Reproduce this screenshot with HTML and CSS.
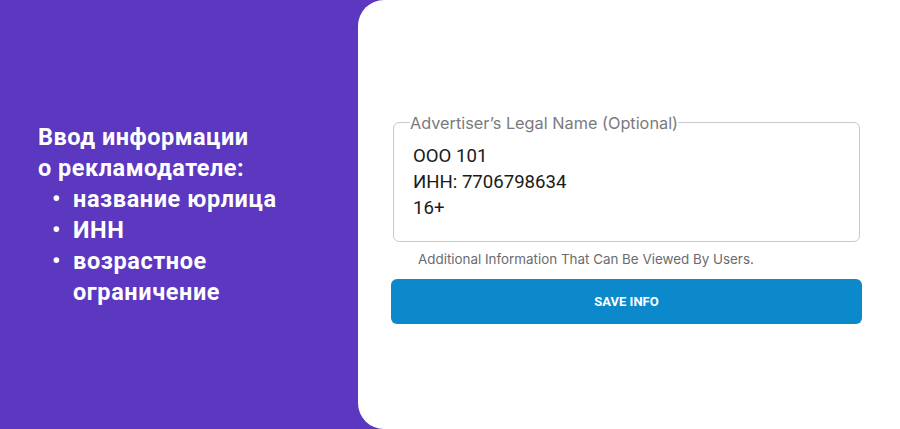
FILE: index.html
```html
<!DOCTYPE html>
<html lang="ru">
<head>
    <meta charset="UTF-8">
    <title>Advertiser info</title>
    <link rel="stylesheet" href="styles.css">
</head>
<body>
    <div class="page">
        <div class="promo">
            <p class="promo-title">Ввод информации<br>о рекламодателе:</p>
            <ul class="promo-list">
                <li>название юрлица</li>
                <li>ИНН</li>
                <li><span>возрастное<br>ограничение</span></li>
            </ul>
        </div>
        <div class="panel">
            <form class="info-form" action="">
                <fieldset class="field">
                    <legend>Advertiser’s Legal Name (Optional)</legend>
                    <div class="field-value">ООО 101<br>ИНН: 7706798634<br>16+</div>
                </fieldset>
                <p class="hint">Additional Information That Can Be Viewed By Users.</p>
                <button class="save-btn" type="button">SAVE INFO</button>
            </form>
        </div>
    </div>
</body>
</html>
```

FILE: styles.css
```css
body {
    margin: 0;
    font-family: Roboto, "Liberation Sans", sans-serif;
    background: #5c37c0;
}

.page {
    display: flex;
    height: 429px;
    overflow: hidden;
}

.promo {
    width: 358px;
    flex-shrink: 0;
    display: flex;
    flex-direction: column;
    justify-content: center;
    padding-left: 38px;
    box-sizing: border-box;
    color: #fff;
    font-weight: 700;
    line-height: 31px;
}

.promo-title {
    margin: 0;
    font-size: 23.5px;
    letter-spacing: 0.5px;
}

.promo-list {
    margin: 0;
    padding: 0;
    list-style-type: none;
    font-size: 23.5px;
    letter-spacing: 0.6px;
}

.promo-list > li {
    display: flex;
}

.promo-list > li::before {
    content: "•";
    width: 21px;
    padding-left: 14px;
    flex-shrink: 0;
}

.panel {
    flex: 1;
    background: #fff;
    border-radius: 26px 0 0 26px;
    display: flex;
    flex-direction: column;
    justify-content: center;
    padding: 8px 38px 0 33px;
}

.info-form {
    display: flex;
    flex-direction: column;
}

.field {
    margin: 0 2px;
    padding: 11px 16px 20px;
    border: 1px solid #c9c9cc;
    border-radius: 6px;
}

.field legend {
    padding: 0;
    font-family: Inter, Roboto, sans-serif;
    font-size: 16.3px;
    line-height: 18px;
    color: #7a7a7e;
}

.field-value {
    padding-left: 3px;
    font-size: 18.6px;
    line-height: 26px;
    color: #1a1a1a;
}

.hint {
    margin: 9px 0 0 27px;
    font-family: Inter, Roboto, sans-serif;
    font-size: 13.4px;
    line-height: 17px;
    color: #6b6b6f;
}

.save-btn {
    margin-top: 11px;
    height: 45px;
    border: none;
    border-radius: 6px;
    background: #0c89cb;
    color: #fff;
    font-family: Roboto, "Liberation Sans", sans-serif;
    font-size: 13px;
    font-weight: 700;
}
```
